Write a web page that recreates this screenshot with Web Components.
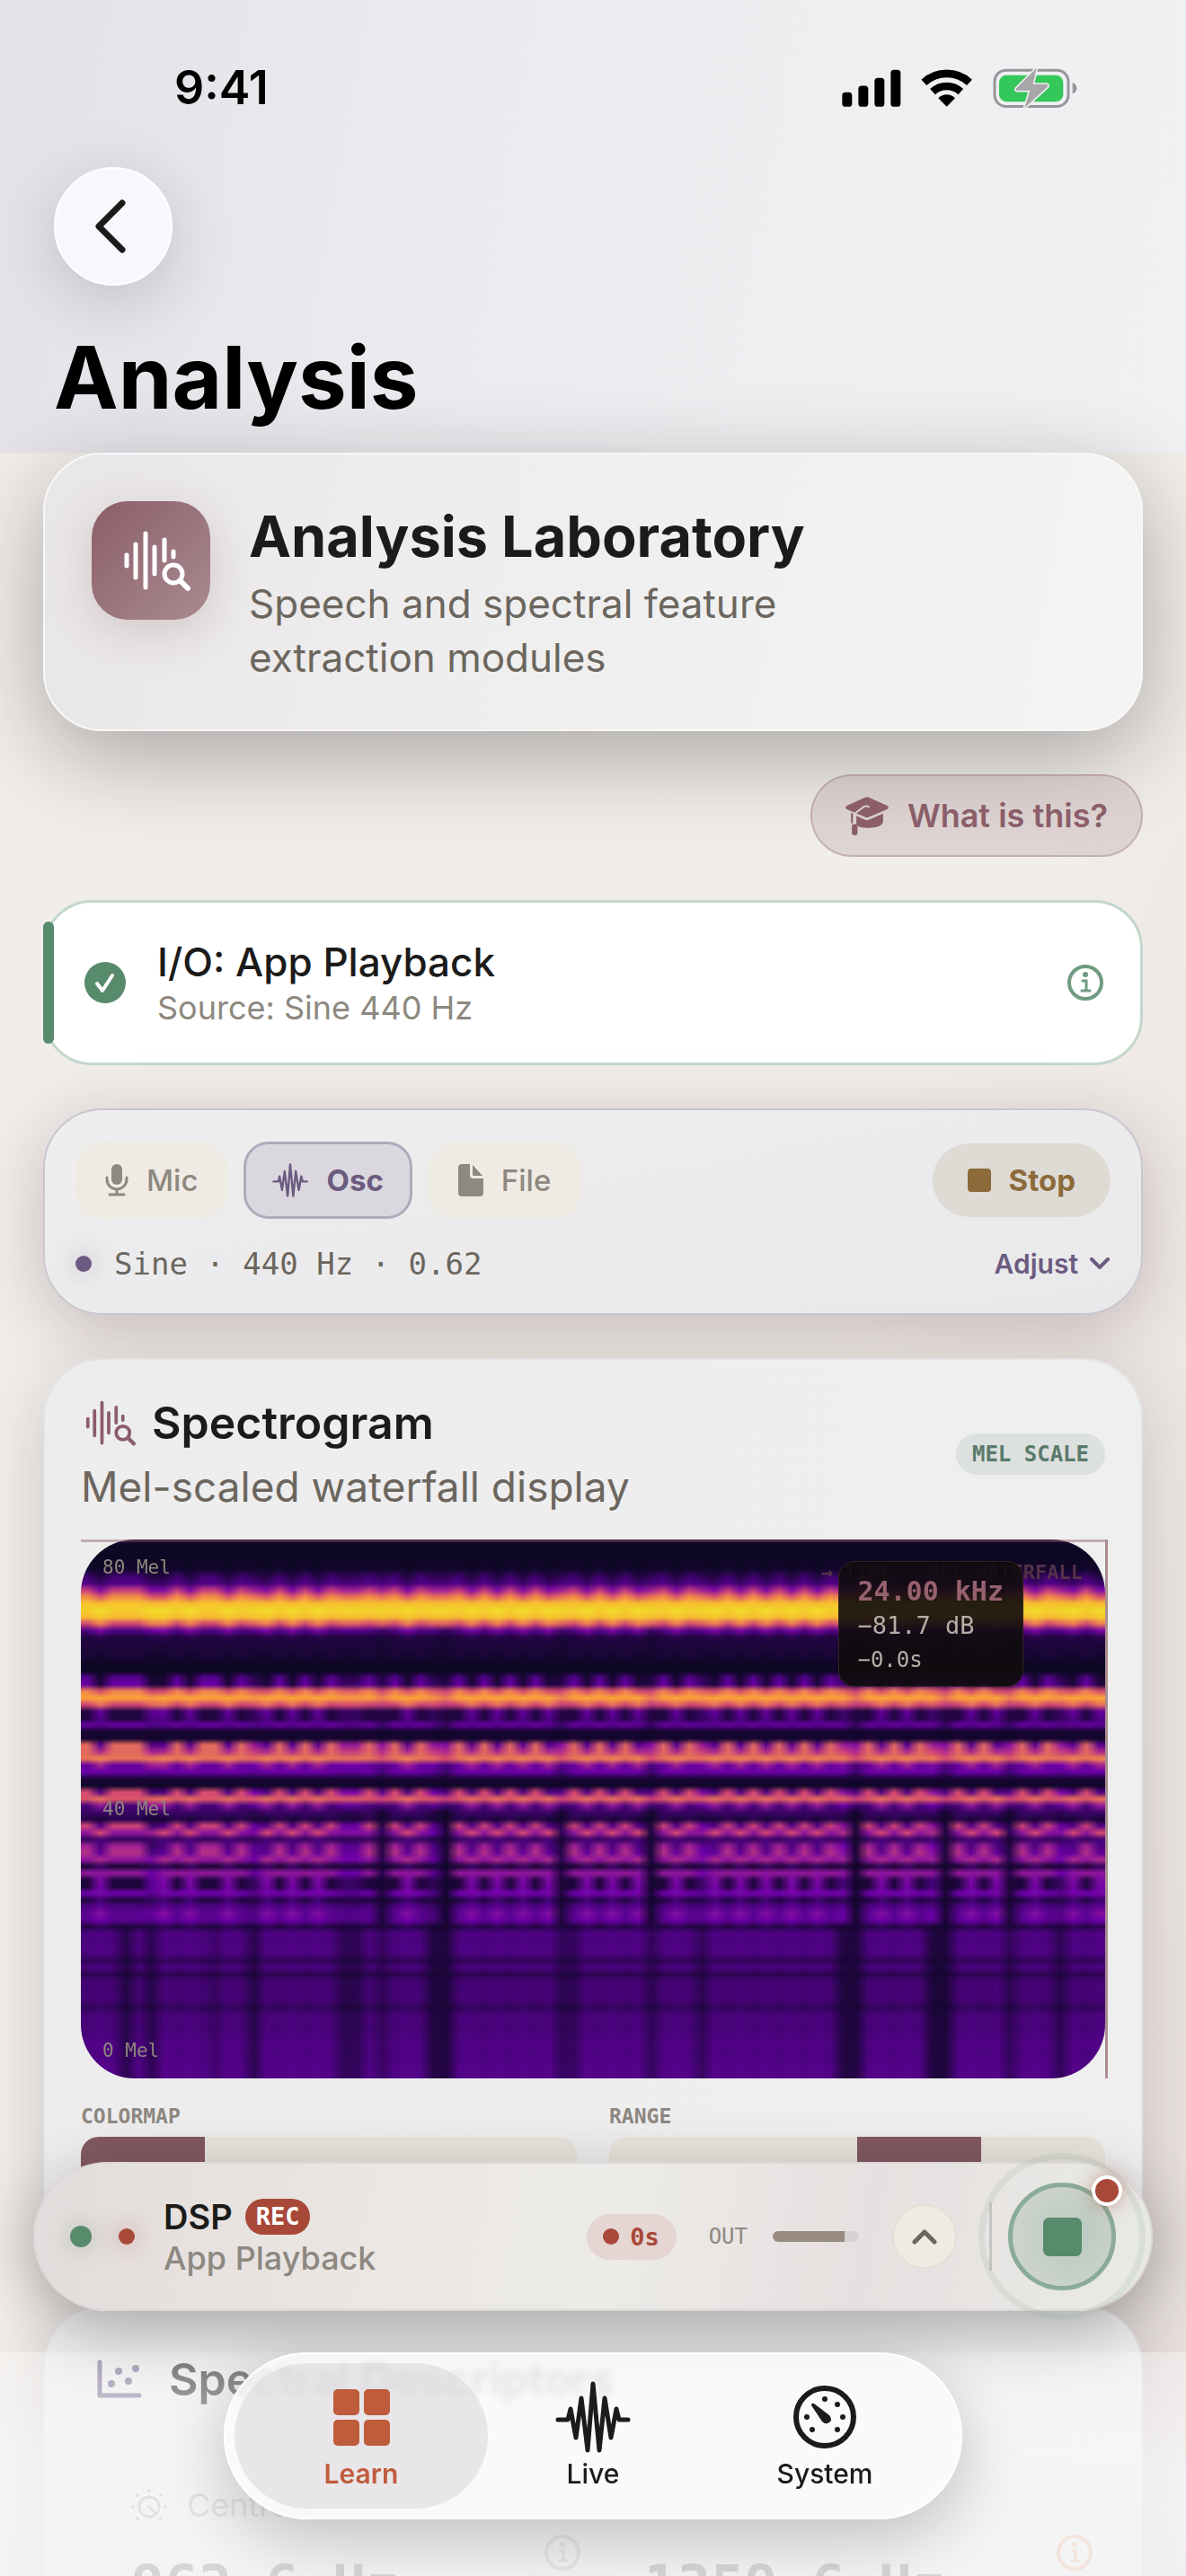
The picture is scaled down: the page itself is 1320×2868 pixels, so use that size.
<!DOCTYPE html>
<html lang="en">
<head>
<meta charset="utf-8">
<meta name="viewport" content="width=device-width, initial-scale=1">
<title>Analysis</title>
<style>
  html, body {
    margin: 0;
    height: 100%;
    overflow: hidden;
  }

  body {
    --ink: #1c1b1a;
    --ink-soft: #6b665e;
    --ink-faint: #8d8880;
    --plum: #8b5e69;
    --plum-deep: #835963;
    --green: #588a6c;
    --violet: #6c5b80;
    --red: #a84838;
    --rust: #bf5c3c;
    --sand: #efebe4;
    --mono: "DejaVu Sans Mono", monospace;
    font-family: Inter, "Liberation Sans", sans-serif;
    color: var(--ink);
  }
</style>
</head>
<body>
<analysis-screen></analysis-screen>

<script>
function define(name, css, html, setup) {
  const template = document.createElement("template");
  template.innerHTML = `<style>*, *::before, *::after { box-sizing: border-box; }
    button { font: inherit; color: inherit; border: 0; margin: 0; padding: 0; background: none; }
    ${css}</style>${html}`;

  customElements.define(name, class extends HTMLElement {
    constructor() {
      super();
      this.attachShadow({ mode: "open" }).appendChild(template.content.cloneNode(true));
    }

    connectedCallback() {
      if (setup) setup(this.shadowRoot, this);
    }
  });
}

// name: [viewBox width, viewBox height, markup]
const ICONS = {
  back: [36, 60, `<path d="M32 4 6 30l26 26" fill="none" stroke="currentColor" stroke-width="7" stroke-linecap="round" stroke-linejoin="round"/>`],
  waveSearch: [76, 72, `<g fill="none" stroke="currentColor" stroke-width="5" stroke-linecap="round">
    <path d="M5 30v12M15 18v37M26 6v60M36 21v30M47 13v23M57 26v6"/>
    <circle cx="57" cy="51" r="10"/><path d="m65 59 8 8" stroke-width="6"/></g>`],
  cap: [144, 130, `<path fill="currentColor" d="M66 2q6-3 12 0l62 28q8 6 0 12L78 69q-6 3-12 0L4 42q-8-6 0-12z"/>
    <path fill="currentColor" d="M36 64l30 14q6 3 12 0l48-21v28q-4 20-52 20-34 0-38-12z"/>
    <path fill="currentColor" d="M18 54l8 5-2 34-6-6z"/>
    <path fill="none" stroke="#d7cdcc" stroke-width="6" stroke-linecap="round" d="M78 34q-12-6-20 2L32 56q-4 3-4 10v26"/>
    <rect fill="currentColor" x="21" y="92" width="19" height="38" rx="8"/>`],
  check: [46, 46, `<circle cx="23" cy="23" r="23" fill="currentColor"/>
    <path d="m14 24 6 8 11-17" fill="none" stroke="#fff" stroke-width="4" stroke-linecap="round" stroke-linejoin="round"/>`],
  info: [40, 40, `<circle cx="20" cy="20" r="18" fill="none" stroke="currentColor" stroke-width="4"/>
    <circle cx="20" cy="11" r="3" fill="currentColor"/>
    <path d="M17 18h4v11M16 29h9" fill="none" stroke="currentColor" stroke-width="3" stroke-linecap="round"/>`],
  mic: [26, 36, `<rect x="7" y="0" width="12" height="23" rx="6" fill="currentColor"/>
    <path d="M2 15v2a11 11 0 0 0 22 0v-2M13 28v6M5 34h16" fill="none" stroke="currentColor" stroke-width="3" stroke-linecap="round"/>`],
  wave: [84, 80, `<path d="M3 43h11l3-12 6 32 6-44 7 58 6-74 7 74 6-58 7 44 6-32 3 12h10" fill="none" stroke="currentColor" stroke-width="5" stroke-linecap="round" stroke-linejoin="round"/>`],
  file: [28, 36, `<path fill="currentColor" d="M4 0h9v12q0 4 4 4h11v16q0 4-4 4H4q-4 0-4-4V4q0-4 4-4z"/>
    <path fill="currentColor" d="M16 1l11 12H17q-1 0-1-1z"/>`],
  stop: [26, 26, `<rect width="26" height="26" rx="4" fill="currentColor"/>`],
  down: [24, 14, `<path d="m3 2 9 9 9-9" fill="none" stroke="currentColor" stroke-width="4" stroke-linecap="round" stroke-linejoin="round"/>`],
  up: [28, 18, `<path d="M3 15 14 4l11 11" fill="none" stroke="currentColor" stroke-width="5" stroke-linecap="round" stroke-linejoin="round"/>`],
  scatter: [50, 44, `<path d="M3 3v37h44" fill="none" stroke="currentColor" stroke-width="5" stroke-linecap="round" stroke-linejoin="round"/>
    <g fill="currentColor"><circle cx="24" cy="13" r="4"/><circle cx="43" cy="10" r="4"/><circle cx="16" cy="27" r="4"/><circle cx="35" cy="24" r="4"/></g>`],
  dial: [40, 40, `<circle cx="20" cy="22" r="11" fill="none" stroke="currentColor" stroke-width="3"/>
    <path d="m20 22 7 7" stroke="currentColor" stroke-width="3" stroke-linecap="round"/>
    <g fill="currentColor"><circle cx="20" cy="4" r="2"/><circle cx="7" cy="9" r="2"/><circle cx="33" cy="9" r="2"/><circle cx="2" cy="22" r="2"/><circle cx="38" cy="22" r="2"/><circle cx="7" cy="35" r="2"/><circle cx="33" cy="35" r="2"/></g>`],
  grid: [63, 63, `<g fill="currentColor"><rect width="29" height="29" rx="5"/><rect x="34" width="29" height="29" rx="5"/><rect y="34" width="29" height="29" rx="5"/><rect x="34" y="34" width="29" height="29" rx="5"/></g>`],
  gauge: [70, 70, `<circle cx="35" cy="35" r="32" fill="none" stroke="currentColor" stroke-width="6"/>
    <g fill="currentColor"><circle cx="35" cy="15" r="3"/><circle cx="49" cy="21" r="3"/><circle cx="55" cy="35" r="3"/><circle cx="49" cy="49" r="3"/><circle cx="21" cy="49" r="3"/><circle cx="15" cy="35" r="3"/>
    <path d="M20 22q0-3 3-2l17 13q4 5 0 8-4 3-8-1z"/></g>`],
  // signal bars, wifi fan and the charging battery in one strip
  status: [786, 140, `<g transform="translate(-50 -40)">
    <rect x="51" y="123" width="33" height="48" rx="11"/><rect x="105" y="101" width="33" height="70" rx="11"/>
    <rect x="159" y="75" width="33" height="96" rx="11"/><rect x="213" y="48" width="33" height="123" rx="11"/>
    <path d="M324 90A112 112 0 0 1 476 90" fill="none" stroke="#000" stroke-width="26"/>
    <path d="M353 121A69 69 0 0 1 447 121" fill="none" stroke="#000" stroke-width="25"/>
    <path d="M400 171 372 142A40 40 0 0 1 428 142Z"/>
    <rect x="560" y="49" width="246" height="121" rx="38" fill="none" stroke="#96969a" stroke-width="9"/>
    <rect x="575" y="66" width="214" height="88" rx="24" fill="#34c759"/>
    <path d="M820 90q14 6 14 19t-14 19z" fill="#96969a"/>
    <path d="M700 42 632 110q-4 6 4 7h42l-18 58 76-70q5-8-4-9h-44z" fill="#a7a7a9" stroke="#ededf0" stroke-width="10" stroke-linejoin="round" paint-order="stroke"/></g>`],
};

class UiIcon extends HTMLElement {
  connectedCallback() {
    const [w, h, body] = ICONS[this.getAttribute("name")];
    const width = Number(this.getAttribute("width")) || w;
    if (!this.shadowRoot) this.attachShadow({ mode: "open" });
    this.shadowRoot.innerHTML = `
      <style>:host { display: inline-flex; flex: none; } svg { display: block; }</style>
      <svg width="${width}" height="${Math.round(width * h / w)}" viewBox="0 0 ${w} ${h}" aria-hidden="true">${body}</svg>`;
  }
}
customElements.define("ui-icon", UiIcon);

define("screen-header", `
  :host {
    display: block;
    padding: 0 60px 24px;
    background: linear-gradient(100deg, #e4e1e8 0%, #ebeaee 35%, #efeff2 70%, #f0f1f3 100%);
  }
  .status {
    display: flex;
    justify-content: space-between;
    align-items: center;
    height: 186px;
    padding: 10px 61px 0 134px;
    color: #000;
    font-size: 52px;
    font-weight: 600;
    line-height: 60px;
  }
  button {
    display: flex;
    align-items: center;
    justify-content: center;
    width: 132px;
    height: 132px;
    padding-right: 8px;
    border: 2px solid #fff;
    border-radius: 50%;
    background: #f9f7fd;
    box-shadow: 0 16px 72px rgba(0, 0, 0, .17);
  }
  h1 {
    margin: 42px 0 0;
    color: #000;
    font-size: 96px;
    line-height: 120px;
    font-weight: 700;
  }
`, `
  <div class="status"><time>9:41</time><ui-icon name="status" width="262"></ui-icon></div>
  <button aria-label="Back"><ui-icon name="back"></ui-icon></button>
  <h1><slot></slot></h1>
`);

define("glass-card", `
  :host {
    display: block;
    border: 2px solid rgba(225, 224, 226, .9);
    border-radius: 66px;
    background: linear-gradient(100deg, #ededed, #efeeef 50%, #f0efef);
    box-shadow: 0 16px 72px rgba(70, 50, 50, .2);
  }
  :host([tone="hero"]) {
    border-color: #f7f7f7;
    background: linear-gradient(100deg, #e9e6e6, #efeeee 40%, #f4f4f4);
    box-shadow: 0 28px 100px rgba(0, 0, 0, .3);
  }
  :host([tone="violet"]) {
    border-color: #c9c6cf;
    background: linear-gradient(170deg, #eeeeef, #e9e9eb);
    box-shadow: 0 16px 72px rgba(70, 40, 50, .25);
  }
`, `<slot></slot>`);

define("hero-banner", `
  :host { display: flex; gap: 43px; padding: 52px 52px 50px; }
  .tile {
    display: flex;
    flex: none;
    align-items: center;
    justify-content: center;
    width: 132px;
    height: 132px;
    padding-left: 12px;
    border-radius: 40px;
    color: #fff;
    background: linear-gradient(135deg, #8b5e69, #a98a91);
    box-shadow: 0 12px 48px rgba(139, 94, 105, .25);
  }
  h2 { margin: 0 0 6px; font-size: 63px; line-height: 78px; font-weight: 700; }
  p { margin: 0; max-width: 680px; color: var(--ink-soft); font-size: 44px; line-height: 60px; }
`, `
  <div class="tile"><ui-icon name="waveSearch"></ui-icon></div>
  <div><h2><slot name="title"></slot></h2><p><slot></slot></p></div>
`);

define("help-pill", `
  :host { display: block; }
  button {
    display: flex;
    align-items: center;
    gap: 21px;
    height: 92px;
    padding: 0 37px;
    border: 2px solid rgba(139, 94, 105, .3);
    border-radius: 46px;
    background: rgba(139, 94, 105, .17);
    color: var(--plum);
    font-size: 36px;
    font-weight: 600;
  }
`, `<button><ui-icon name="cap" width="48"></ui-icon><span><slot></slot></span></button>`);

define("io-status", `
  :host {
    display: flex;
    align-items: center;
    height: 184px;
    padding-right: 41px;
    border: 3px solid #c4d7cc;
    border-radius: 54px;
    background: #fff;
    color: var(--green);
  }
  .bar { align-self: stretch; width: 12px; margin: 21px 34px 21px -3px; border-radius: 6px; background: var(--green); }
  .text { flex: 1; margin-left: 35px; }
  h3 { margin: 0 0 2px; color: var(--ink); font-size: 44px; line-height: 54px; font-weight: 500; }
  p { margin: 0; color: var(--ink-faint); font-size: 36px; line-height: 44px; }
  button { display: flex; opacity: .85; }
`, `
  <div class="bar"></div>
  <ui-icon name="check"></ui-icon>
  <div class="text"><h3><slot name="title"></slot></h3><p><slot></slot></p></div>
  <button aria-label="Details"><ui-icon name="info"></ui-icon></button>
`);

define("source-button", `
  :host { display: block; }
  button {
    display: flex;
    align-items: center;
    gap: 20px;
    height: 86px;
    padding: 0 33px;
    border-radius: 28px;
    background: var(--sand);
    color: var(--ink-faint);
    font-size: 33px;
    font-weight: 500;
  }
  :host([selected]) button {
    padding: 0 29px;
    border: 3px solid #b0aabc;
    background: #dad7df;
    color: var(--violet);
    font-weight: 700;
  }
  :host([stop]) button {
    height: 82px;
    padding: 0 39px;
    border-radius: 41px;
    background: #dedad4;
    color: #8c6a3a;
    font-weight: 700;
  }
`, `<button><slot name="icon"></slot><span><slot></slot></span></button>`);

define("source-panel", `
  :host { display: flex; flex-direction: column; gap: 30px; padding: 35px 34px; }
  .row { display: flex; align-items: center; gap: 18px; }
  .row source-button:last-child, .readout button { margin-left: auto; }
  .readout { gap: 25px; height: 40px; color: var(--ink-soft); font: 34px/40px var(--mono); }
  .dot { width: 18px; height: 18px; border-radius: 50%; background: var(--violet); box-shadow: 0 0 24px rgba(108, 91, 128, .4); }
  .readout button { display: flex; align-items: center; gap: 12px; color: var(--violet); font: 600 30px/40px Inter, sans-serif; }
`, `
  <div class="row">
    <source-button><ui-icon slot="icon" name="mic"></ui-icon>Mic</source-button>
    <source-button selected><ui-icon slot="icon" name="wave" width="40"></ui-icon>Osc</source-button>
    <source-button><ui-icon slot="icon" name="file"></ui-icon>File</source-button>
    <source-button stop><ui-icon slot="icon" name="stop"></ui-icon>Stop</source-button>
  </div>
  <div class="row readout">
    <span class="dot"></span><span><slot></slot></span>
    <button>Adjust <ui-icon name="down"></ui-icon></button>
  </div>
`);

// One letter per time frame: u/d = upper/lower phase of the tone, m = in between, x = dropout.
const PHASES = [
  "uduuuddudu", "udumdududu", "mmuxudumxu", "dudududxud",
  "ududxudumd", "ududududum", "xududumxud", "udxudumdud",
].join("");

// Upper and lower phase level of each mel band, top to bottom.
const BANDS = [
  [.03, .02], [.01, .01], [.01, .01], [.03, .01], [.07, .05], [.26, .14], [.32, .24], [.64, .46], [.82, .7], [.95, .93],
  [.97, 1], [.92, .96], [.66, .78], [.3, .45], [.14, .18], [.13, .13], [.12, .1], [.09, .04], [.02, .01], [.01, .01],
  [.34, .07], [.4, .12], [.8, .68], [.87, .88], [.66, .76], [.14, .38], [.12, .33], [.38, .34], [.06, .08], [.08, .03],
  [.74, .34], [.74, .58], [.76, .8], [.38, .56], [.4, .4], [.12, .12], [.04, .02], [.68, .3], [.7, .76], [.28, .52],
  [.22, .25], [.18, .1], [.66, .32], [.5, .68], [.22, .28], [.56, .3], [.6, .36], [.5, .58], [.1, .22], [.52, .5],
  [.14, .46], [.1, .44], [.42, .44], [.14, .26], [.3, .36], [.34, .48], [.34, .42], [.16, .2], [.3, .32], [.28, .3],
  [.3, .31], [.28, .3], [.2, .22], [.28, .3], [.18, .2], [.26, .27], [.26, .28], [.27, .28], [.26, .27], [.2, .22],
  [.27, .29], [.28, .29], [.27, .29], [.28, .3], [.3, .31], [.3, .32], [.29, .31], [.3, .32], [.31, .33], [.31, .33],
];

// Level lost per frame in a dropout: GAPS in the noise floor, FADES in the harmonics.
const GAPS = { 3: .4, 5: .4, 10: .15, 13: .4, 20: .35, 21: .35, 23: .25, 27: .5, 28: .55, 37: .3, 38: .25, 44: .3, 48: .3, 59: .5, 60: .55, 66: .55, 67: .6, 72: .3, 76: .35 };
const FADES = { 5: .2, 13: .25, 20: .2, 21: .2, 23: .65, 27: .3, 28: .8, 37: .65, 44: .75, 48: .15, 60: .8, 67: .75, 72: .65, 76: .2 };

const STOPS = [[0, 12, 7, 34], [.15, 34, 6, 66], [.3, 78, 3, 130], [.42, 112, 0, 172], [.55, 160, 32, 150], [.68, 215, 75, 112], [.8, 242, 135, 78], [.88, 252, 165, 54], [1, 241, 220, 40]];

function plasma(v) {
  let i = 1;
  while (i < STOPS.length - 1 && v > STOPS[i][0]) i++;
  const a = STOPS[i - 1], b = STOPS[i];
  const t = Math.max(0, Math.min(1, (v - a[0]) / (b[0] - a[0])));
  return [1, 2, 3].map(n => a[n] + (b[n] - a[n]) * t);
}

function drawSpectrogram(canvas) {
  const size = BANDS.length;
  const mixes = { u: 0, m: .5, x: .5, d: 1 };
  const ctx = canvas.getContext("2d");
  const image = ctx.createImageData(size, size);
  for (let x = 0; x < size; x++) {
    const mix = mixes[PHASES[x]];
    for (let y = 0; y < size; y++) {
      const [up, low] = BANDS[y];
      let v = up + (low - up) * mix;
      if (y >= 57) v *= 1 - (GAPS[x] || 0);
      else if (y >= 40) v *= 1 - (FADES[x] || 0);
      else if (y >= 13) v *= 1 - (FADES[x] || 0) * (v > .5 ? .15 : .5);
      image.data.set([...plasma(v), 255], (y * size + x) * 4);
    }
  }
  ctx.putImageData(image, 0, 0);
}

define("mel-plot", `
  :host { display: block; position: relative; height: 600px; font: 21px/26px var(--mono); }
  canvas { display: block; width: 100%; height: 100%; border-radius: 60px; }
  .marker { position: absolute; inset: 0 -3px 0 0; border-top: 3px solid rgba(139, 94, 105, .45); }
  .marker::after { content: ""; position: absolute; inset: -3px 0 0 auto; width: 3px; background: #ab8d90; }
  .axis { position: absolute; inset: 18px auto 18px 24px; display: flex; flex-direction: column; justify-content: space-between; color: #8d877c; }
  .caption { position: absolute; top: 24px; right: 25px; color: #55304a; font-size: 22px; font-weight: 700; }
  .tip {
    position: absolute;
    top: 24px;
    right: 91px;
    padding: 14px 21px 10px 20px;
    border: 1px solid #33241f;
    border-radius: 18px;
    background: rgba(15, 12, 13, .9);
    color: #b5afa6;
    line-height: 38px;
  }
  .tip strong { display: block; color: #95626d; font-size: 30px; }
  .tip span { display: block; font-size: 27px; }
  .tip small { display: block; font-size: 24px; }
`, `
  <canvas width="80" height="80" role="img" aria-label="Mel spectrogram"></canvas>
  <div class="marker"></div>
  <div class="axis"><span>80 Mel</span><span>40 Mel</span><span>0 Mel</span></div>
  <div class="caption">→ TIME · MEL WATERFALL</div>
  <div class="tip"><strong>24.00 kHz</strong><span>−81.7 dB</span><small>−0.0s</small></div>
`, root => drawSpectrogram(root.querySelector("canvas")));

define("segment-picker", `
  :host { display: block; flex: 1; }
  .name { color: var(--ink-faint); font: 700 23px/26px var(--mono); }
  .track { display: flex; height: 96px; margin-top: 10px; overflow: hidden; border-radius: 20px; background: #e9e5dc; }
  button { flex: 1; }
  button[aria-pressed="true"] { background: var(--plum-deep); }
`, `
  <div class="name"><slot></slot></div>
  <div class="track"></div>
`, (root, host) => {
  const active = Number(host.getAttribute("active"));
  root.querySelector(".track").innerHTML = [0, 1, 2, 3]
    .map(i => `<button aria-label="Option ${i + 1}" aria-pressed="${i === active}"></button>`).join("");
});

define("spectrogram-panel", `
  :host { display: block; padding: 40px 40px 42px; }
  header { display: flex; align-items: center; justify-content: space-between; margin-bottom: 30px; }
  .title { display: flex; align-items: center; gap: 18px; margin-bottom: 12px; padding-left: 4px; }
  ui-icon { color: var(--plum); }
  h2 { margin: 0; font-size: 50px; line-height: 60px; font-weight: 600; }
  p { margin: 0; color: var(--ink-soft); font-size: 46px; line-height: 58px; }
  .badge { padding: 0 18px; border-radius: 24px; background: #dce0de; color: #5a7a6b; font: 700 24px/46px var(--mono); }
  .pickers { display: flex; gap: 36px; margin-top: 29px; }
`, `
  <header>
    <div>
      <div class="title"><ui-icon name="waveSearch" width="57"></ui-icon><h2>Spectrogram</h2></div>
      <p>Mel-scaled waterfall display</p>
    </div>
    <span class="badge">MEL SCALE</span>
  </header>
  <mel-plot></mel-plot>
  <div class="pickers">
    <segment-picker active="0">COLORMAP</segment-picker>
    <segment-picker active="2">RANGE</segment-picker>
  </div>
`);

define("metric-tile", `
  :host { display: flex; flex: 1; align-items: center; gap: 15px; color: #a89fb4; }
  .box { flex: 1; padding: 40px 40px; border: 2px solid #e6e1da; border-radius: 48px; background: #f1eee9; white-space: nowrap; }
  .name { display: flex; align-items: center; gap: 22px; height: 44px; color: #8d8880; font-size: 36px; line-height: 44px; }
  ui-icon { color: #a89fb4; }
  .value { margin-top: 31px; color: #55524e; font: 700 62px/74px var(--mono); }
  :host([warm]) .info { color: #e59a6e; }
`, `
  <div class="box"><div class="name"><slot name="name"></slot></div><div class="value"><slot></slot></div></div>
  <ui-icon class="info" name="info"></ui-icon>
`);

define("descriptor-panel", `
  :host { display: block; padding: 50px 54px; }
  .title { display: flex; align-items: center; gap: 30px; padding-left: 4px; color: #72638a; }
  h2 { margin: 0; color: var(--ink); font-size: 50px; line-height: 60px; font-weight: 600; }
  .row { display: flex; gap: 29px; margin-top: 46px; }
`, `
  <div class="title"><ui-icon name="scatter"></ui-icon><h2>Spectral Descriptors</h2></div>
  <div class="row">
    <metric-tile><ui-icon slot="name" name="dial"></ui-icon><span slot="name">Centroid</span>963.6 Hz</metric-tile>
    <metric-tile warm>1359.6 Hz</metric-tile>
  </div>
`);

define("dsp-bar", `
  :host {
    display: flex;
    align-items: center;
    height: 166px;
    padding: 0 39px;
    border: 2px solid #dcd8d8;
    border-radius: 83px;
    background: linear-gradient(100deg, #e3dcdc, #ece9e5 38%, #ecebe8 52%, #e7e0e0 74%, #e8e8e5 92%);
    box-shadow: 0 20px 72px rgba(0, 0, 0, .3);
    color: var(--ink-faint);
  }
  .on { width: 24px; height: 24px; border-radius: 50%; background: var(--green); box-shadow: 0 0 24px rgba(88, 138, 108, .4); }
  .rec { width: 18px; height: 18px; margin: 0 32px 0 30px; border-radius: 50%; background: var(--red); box-shadow: 0 0 24px rgba(168, 72, 56, .5); }
  .name { display: flex; align-items: center; gap: 14px; color: var(--ink); font-size: 38px; line-height: 48px; font-weight: 600; }
  .name b { padding: 0 12px; border-radius: 20px; background: var(--red); color: #fff; font: 700 27px/40px var(--mono); }
  .sub { font-size: 36px; line-height: 44px; font-weight: 500; }
  .time { display: flex; align-items: center; gap: 12px; margin-left: auto; padding: 0 19px 0 18px; border-radius: 26px; background: #e5d5d3; color: var(--red); font: 700 27px/51px var(--mono); }
  .time i { width: 18px; height: 18px; border-radius: 50%; background: var(--red); }
  .out { margin: 0 28px 0 36px; font: 24px/30px var(--mono); }
  meter { width: 96px; height: 12px; appearance: none; border: 0; border-radius: 6px; overflow: hidden; background: linear-gradient(90deg, #988b80 83%, #d7d2d2 83%); }
  meter::-webkit-meter-inner-element { opacity: 0; }
  .more { display: flex; align-items: center; justify-content: center; width: 72px; height: 72px; margin: 0 36px 0 37px; border: 2px solid #e4dfd6; border-radius: 50%; background: var(--sand); color: #6b665e; }
  .rule { width: 3px; height: 76px; margin-right: 18px; background: #c6c5c5; }
  .stop {
    position: relative;
    display: flex;
    align-items: center;
    justify-content: center;
    width: 120px;
    height: 120px;
    border: 5px solid #8aab98;
    border-radius: 50%;
    background: radial-gradient(circle at 60% 50%, #b7cabf, #ccd3cc 70%);
    color: var(--green);
  }
  .stop::before { content: ""; position: absolute; inset: -38px; border: 7px solid rgba(140, 170, 150, .17); border-radius: 50%; }
  .stop::after { content: ""; position: absolute; top: -13px; right: -12px; width: 34px; height: 34px; border: 4px solid #fff; border-radius: 50%; background: var(--red); box-shadow: 0 0 20px rgba(168, 72, 56, .5); }
`, `
  <span class="on"></span><span class="rec"></span>
  <div>
    <div class="name">DSP <b>REC</b></div>
    <div class="sub">App Playback</div>
  </div>
  <span class="time"><i></i>0s</span>
  <label class="out" for="level">OUT</label>
  <meter id="level" value="83" max="100"></meter>
  <button class="more" aria-label="Expand"><ui-icon name="up"></ui-icon></button>
  <span class="rule"></span>
  <button class="stop" aria-label="Stop"><ui-icon name="stop" width="43"></ui-icon></button>
`);

define("tab-link", `
  :host { display: block; flex: 1; }
  a {
    display: flex;
    flex-direction: column;
    align-items: center;
    height: 162px;
    padding-top: 20px;
    border-radius: 81px;
    color: var(--ink);
    font-size: 30px;
    line-height: 36px;
    font-weight: 500;
    text-decoration: none;
  }
  .icon { display: flex; align-items: center; height: 80px; margin-bottom: 5px; }
  :host([selected]) a { margin: 0 -12px; background: rgba(214, 212, 213, .5); color: var(--rust); font-weight: 600; }
`, `<a href="#"><span class="icon"><slot name="icon"></slot></span><span><slot></slot></span></a>`);

define("tab-dock", `
  :host {
    display: flex;
    width: 822px;
    max-width: 90%;
    padding: 10px 22px;
    border: 2px solid rgba(255, 255, 255, .9);
    border-radius: 93px;
    background: rgba(253, 250, 251, .78);
    backdrop-filter: blur(5px);
    box-shadow: 0 20px 72px rgba(0, 0, 0, .22);
  }
`, `<slot></slot>`);

define("analysis-screen", `
  :host { display: block; position: relative; height: 100%; background: linear-gradient(115deg, #f1edea 30%, #f1ede9 60%, #e6dedc); }
  main { height: 100%; overflow-y: auto; scrollbar-width: none; }
  .stack { display: flex; flex-direction: column; gap: 48px; padding: 0 48px 400px; }
  help-pill { align-self: flex-end; }
  .fade {
    position: absolute;
    inset: auto 0 0;
    height: 249px;
    background: linear-gradient(rgba(251, 251, 251, .42), rgba(248, 248, 248, .74) 45%, rgba(246, 245, 246, .83) 70%, rgba(246, 245, 246, .8));
    pointer-events: none;
  }
  dsp-bar { position: absolute; inset: auto 37px 295px; }
  nav { position: absolute; inset: auto 0 63px; display: flex; justify-content: center; }
`, `
  <main>
    <screen-header>Analysis</screen-header>
    <div class="stack">
      <glass-card tone="hero">
        <hero-banner><span slot="title">Analysis Laboratory</span>Speech and spectral feature extraction modules</hero-banner>
      </glass-card>
      <help-pill>What is this?</help-pill>
      <io-status><span slot="title">I/O: App Playback</span>Source: Sine 440 Hz</io-status>
      <glass-card tone="violet"><source-panel>Sine · 440 Hz · 0.62</source-panel></glass-card>
      <glass-card><spectrogram-panel></spectrogram-panel></glass-card>
      <glass-card><descriptor-panel></descriptor-panel></glass-card>
    </div>
  </main>
  <div class="fade"></div>
  <dsp-bar></dsp-bar>
  <nav>
    <tab-dock>
      <tab-link selected><ui-icon slot="icon" name="grid"></ui-icon>Learn</tab-link>
      <tab-link><ui-icon slot="icon" name="wave"></ui-icon>Live</tab-link>
      <tab-link><ui-icon slot="icon" name="gauge"></ui-icon>System</tab-link>
    </tab-dock>
  </nav>
`);
</script>
</body>
</html>
